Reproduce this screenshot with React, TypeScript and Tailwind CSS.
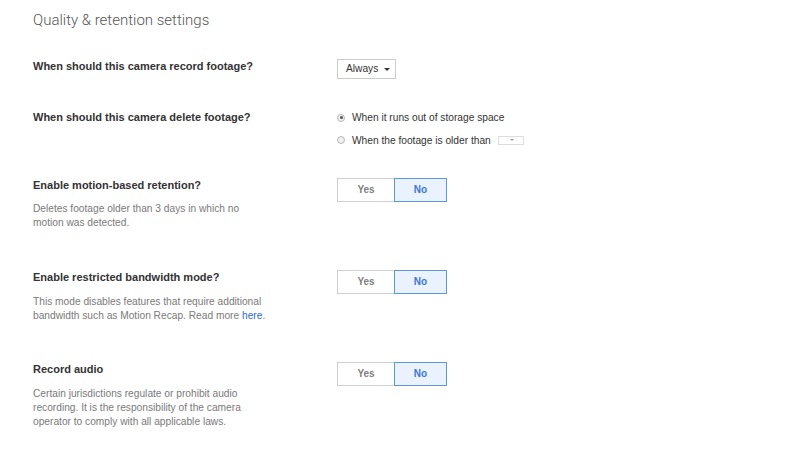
import React from "react";

function Toggle() {
  return (
    <div className="flex h-[24px] w-[110px] text-[10px] font-bold leading-none">
      <div className="flex w-[57px] items-center justify-center border border-r-0 border-[#cfcfcf] bg-white text-[#808080]">
        Yes
      </div>
      <div className="flex w-[53px] items-center justify-center border border-[#5a97e6] bg-[#eaf2fd] text-[#3b78d8]">
        No
      </div>
    </div>
  );
}

function Radio({ checked }: { checked?: boolean }) {
  return (
    <span className="flex h-[8px] w-[8px] items-center justify-center rounded-full border border-[#b9b9b9] bg-[#f0f0f0]">
      {checked && <span className="h-[3px] w-[3px] rounded-full bg-[#555]" />}
    </span>
  );
}

function Caret({ cls }: { cls: string }) {
  return <span className={cls} />;
}

export default function App() {
  return (
    <div className="h-[451px] w-[792px] bg-white pl-[33px] pt-[10px] font-['Liberation_Sans',Arial,sans-serif] text-[#333]">
      <h1 className="font-['Roboto',sans-serif] text-[15px] font-light leading-[20px] text-[#555]">
        Quality &amp; retention settings
      </h1>

      {/* Row 1 */}
      <div className="mt-[29px] flex">
        <div className="w-[304px] text-[11px] font-bold leading-[15px] text-[#333]">
          When should this camera record footage?
        </div>
        <div className="flex h-[20px] w-[59px] items-center gap-[6px] border border-[#cccccc] bg-white pl-[8px] text-[10.2px] text-[#333]">
          <span>Always</span>
          <Caret cls="h-0 w-0 border-x-[3px] border-t-[3px] border-x-transparent border-t-[#333]" />
        </div>
      </div>

      {/* Row 2 */}
      <div className="mt-[31px] flex">
        <div className="w-[304px] text-[11px] font-bold leading-[15px] text-[#333]">
          When should this camera delete footage?
        </div>
        <div className="flex flex-col gap-[7.5px] text-[10.2px] leading-[15px] text-[#333]">
          <div className="flex items-center gap-[7px]">
            <Radio checked />
            <span>When it runs out of storage space</span>
          </div>
          <div className="flex items-center gap-[7px]">
            <Radio />
            <span>When the footage is older than</span>
            <span className="flex h-[9px] w-[26px] items-center justify-center border border-[#dddddd] bg-white">
              <Caret cls="ml-[2px] h-0 w-0 border-x-[2.5px] border-t-[2.5px] border-x-transparent border-t-[#999]" />
            </span>
          </div>
        </div>
      </div>

      {/* Row 3 */}
      <div className="mt-[30px] flex">
        <div className="w-[304px]">
          <div className="text-[11px] font-bold leading-[15px] text-[#333]">
            Enable motion-based retention?
          </div>
          <p className="mt-[9px] w-[236px] text-[10.2px] leading-[14px] text-[#7a7a7a]">
            Deletes footage older than 3 days in which no motion was detected.
          </p>
        </div>
        <Toggle />
      </div>

      {/* Row 4 */}
      <div className="mt-[40px] flex">
        <div className="w-[304px]">
          <div className="text-[11px] font-bold leading-[15px] text-[#333]">
            Enable restricted bandwidth mode?
          </div>
          <p className="mt-[10px] w-[236px] text-[10.2px] leading-[14px] text-[#7a7a7a]">
            This mode disables features that require additional bandwidth such as Motion Recap. Read more{" "}
            <a className="text-[#2a6bd1]">here</a>.
          </p>
        </div>
        <Toggle />
      </div>

      {/* Row 5 */}
      <div className="mt-[39px] flex">
        <div className="w-[304px]">
          <div className="text-[11px] font-bold leading-[15px] text-[#333]">Record audio</div>
          <p className="mt-[10px] w-[236px] text-[10.2px] leading-[14px] text-[#7a7a7a]">
            Certain jurisdictions regulate or prohibit audio recording. It is the responsibility of the camera
            operator to comply with all applicable laws.
          </p>
        </div>
        <Toggle />
      </div>
    </div>
  );
}
